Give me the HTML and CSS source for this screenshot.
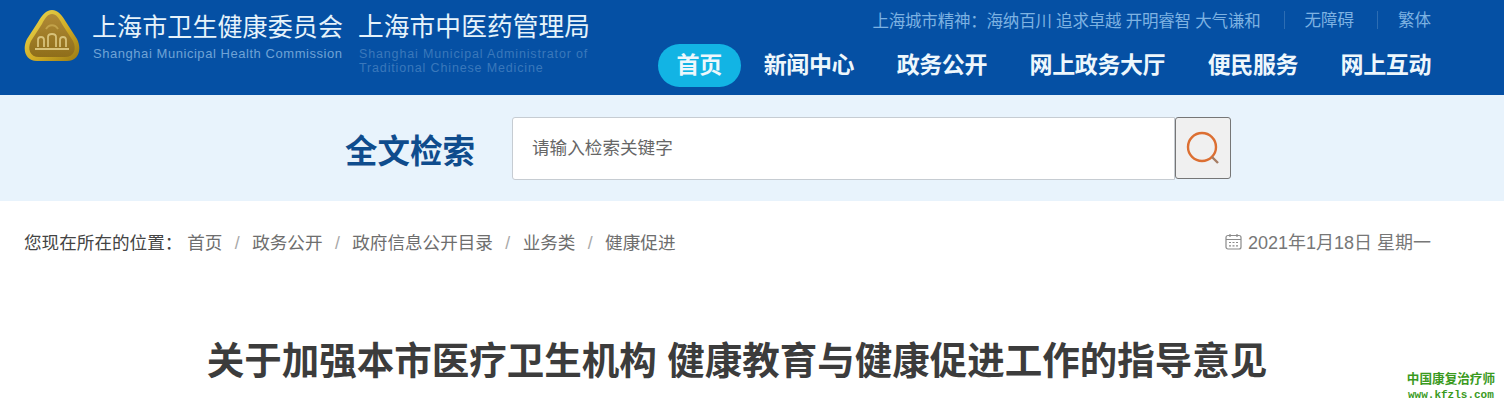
FILE: index.html
```html
<!DOCTYPE html>
<html lang="zh-CN">
<head>
    <meta charset="UTF-8">
    <title>关于加强本市医疗卫生机构 健康教育与健康促进工作的指导意见</title>
    <link rel="stylesheet" href="styles.css">
</head>
<body>
    <header class="header">
        <div class="brand">
            <svg class="logo" width="56" height="54" viewBox="0 0 56 54">
                <defs>
                    <linearGradient id="gold" x1="0" y1="0" x2="1" y2="1">
                        <stop offset="0" stop-color="#eadb55"/>
                        <stop offset="0.55" stop-color="#d2ad26"/>
                        <stop offset="1" stop-color="#9a7a14"/>
                    </linearGradient>
                    <linearGradient id="gold-inner" x1="0" y1="0" x2="0" y2="1">
                        <stop offset="0" stop-color="#b08a36"/>
                        <stop offset="1" stop-color="#8f6e1a"/>
                    </linearGradient>
                </defs>
                <path d="M28 1C34 1 38 6 42 13L53 30C58 40 55 52 43 52H13C1 52 -2 40 3 30L14 13C18 6 22 1 28 1Z" fill="url(#gold)"/>
                <path d="M28 5C32 5 35 9 38 15L49 32C53 40 50 48 41 48H15C6 48 3 40 7 32L18 15C21 9 24 5 28 5Z" fill="url(#gold-inner)"/>
                <path d="M11 40H45M14 38V31C14 27 20 27 20 31V38M24 38V28C24 24 32 24 32 28V38M36 38V31C36 27 42 27 42 31V38" stroke="#d8c27a" stroke-width="1.8" fill="none"/>
                <path d="M22 20C25 15 31 15 34 20" stroke="#c2a24a" stroke-width="2" fill="none"/>
            </svg>
            <div class="org">
                <div class="org-name">上海市卫生健康委员会</div>
                <div class="org-en">Shanghai Municipal Health Commission</div>
            </div>
            <div class="org org-second">
                <div class="org-name">上海市中医药管理局</div>
                <div class="org-en org-en-dim">Shanghai Municipal Administrator of<br>Traditional Chinese Medicine</div>
            </div>
        </div>
        <div class="header-right">
            <div class="top-links">
                <span class="motto">上海城市精神：海纳百川 追求卓越 开明睿智 大气谦和</span>
                <a class="top-link">无障碍</a>
                <a class="top-link">繁体</a>
            </div>
            <nav class="nav">
                <a class="nav-item active">首页</a>
                <a class="nav-item">新闻中心</a>
                <a class="nav-item">政务公开</a>
                <a class="nav-item">网上政务大厅</a>
                <a class="nav-item">便民服务</a>
                <a class="nav-item">网上互动</a>
            </nav>
        </div>
    </header>

    <section class="search-band">
        <h2 class="search-title">全文检索</h2>
        <div class="search-input">请输入检索关键字</div>
        <button class="search-btn" type="button" aria-label="搜索">
            <svg width="34" height="34" viewBox="0 0 34 34" fill="none">
                <circle cx="16" cy="16" r="14" stroke="#dc6f32" stroke-width="2.4"/>
                <path d="M26 26L32 32" stroke="#a67c62" stroke-width="2.4"/>
            </svg>
        </button>
    </section>

    <div class="crumb-row">
        <div class="crumbs">
            <span class="crumb-label">您现在所在的位置：</span>
            <a>首页</a><i>/</i><a>政务公开</a><i>/</i><a>政府信息公开目录</a><i>/</i><a>业务类</a><i>/</i><a>健康促进</a>
        </div>
        <div class="date">
            <svg width="17" height="17" viewBox="0 0 17 17" fill="none" stroke="#8a8a8a" stroke-width="1.2">
                <rect x="1" y="2.5" width="15" height="13.5" rx="2"/>
                <path d="M1 6.5H16M5 1V4M12 1V4"/>
                <path d="M4 9.5H6M7.5 9.5H9.5M11 9.5H13M4 12.8H6M7.5 12.8H9.5M11 12.8H13"/>
            </svg>
            <span>2021年1月18日 星期一</span>
        </div>
    </div>

    <h1 class="title">关于加强本市医疗卫生机构 健康教育与健康促进工作的指导意见</h1>

    <div class="watermark">
        <div class="wm-cn">中国康复治疗师</div>
        <div class="wm-en">www.kfzls.com</div>
    </div>
</body>
</html>
```

FILE: styles.css
```css
html, body {
    margin: 0;
    padding: 0;
}
body {
    position: relative;
    height: 406px;
    overflow: hidden;
    background-color: #fff;
    font-family: "Liberation Sans", "Noto Sans CJK SC", sans-serif;
}
.header {
    display: flex;
    justify-content: space-between;
    height: 95px;
    padding: 0 73px 0 24px;
    background-color: #0550a4;
}
.brand {
    display: flex;
    align-items: flex-start;
    padding-top: 9px;
}
.org {
    margin-left: 13px;
    padding-top: 1px;
}
.org-second {
    margin-left: 15px;
}
.org-name {
    margin-left: -1px;
    font-size: 25px;
    line-height: 34px;
    width: 252px;
    letter-spacing: 0.1px;
    color: #e6f3fb;
    white-space: nowrap;
}
.org-second .org-name {
    width: 233px;
    font-size: 25.7px;
}
.org-en {
    margin-top: 3px;
    font-size: 13px;
    line-height: 14px;
    letter-spacing: 0.55px;
    color: #6fa3d6;
    white-space: nowrap;
}
.org-en-dim {
    color: #3a78bb;
    font-size: 12.5px;
    letter-spacing: 0.85px;
}
.header-right {
    display: flex;
    flex-direction: column;
    align-items: flex-end;
}
.top-links {
    display: flex;
    align-items: center;
    height: 39px;
    font-size: 16.5px;
    color: #7db2e2;
}
.motto {
    letter-spacing: -0.2px;
    white-space: nowrap;
}
.top-link {
    margin-left: 23px;
    padding-left: 20px;
    line-height: 18px;
    border-left: 1px solid #2d6db3;
}
.nav {
    display: flex;
    align-items: center;
    margin-top: 5px;
    color: #eef7fc;
}
.nav-item {
    margin-left: 42.5px;
    font-size: 23px;
    font-weight: 700;
    line-height: 43px;
    white-space: nowrap;
    letter-spacing: -0.4px;
}
.nav-item.active {
    margin-left: 0;
    margin-right: -19.5px;
    padding: 0 19px;
    border-radius: 22px;
    background-color: #12b4e4;
}
.search-band {
    display: flex;
    align-items: center;
    height: 106px;
    padding-left: 345px;
    background-color: #e8f3fc;
}
.search-title {
    margin: 0 37px 0 0;
    width: 130px;
    font-size: 32.5px;
    font-weight: 700;
    white-space: nowrap;
    color: #0f4c8d;
}
.search-input {
    box-sizing: border-box;
    width: 663px;
    height: 63px;
    padding-left: 19px;
    font-size: 17.6px;
    line-height: 61px;
    color: #666;
    background-color: #fff;
    border: 1px solid #c6ccd2;
    border-radius: 3px 0 0 3px;
}
.search-btn {
    box-sizing: border-box;
    display: flex;
    align-items: center;
    justify-content: center;
    width: 56px;
    height: 62px;
    padding: 0;
    background-color: #f0f0f0;
    border: 1px solid #767676;
    border-radius: 3px;
}
.crumb-row {
    box-sizing: border-box;
    display: flex;
    justify-content: space-between;
    align-items: center;
    height: 84px;
    padding: 0 73px 4px 24px;
    font-size: 17.6px;
    color: #6e6e6e;
}
.crumb-label {
    color: #444;
}
.crumbs i {
    margin: 0 12.4px;
    font-style: normal;
    color: #a8a8a8;
}
.date {
    display: flex;
    align-items: center;
    gap: 6px;
    font-size: 18px;
    color: #777;
}
.title {
    margin: 51px 0 0;
    padding-right: 30px;
    text-align: center;
    font-size: 37.5px;
    line-height: 50px;
    font-weight: 700;
    color: #3c3c3c;
    white-space: nowrap;
}
.watermark {
    position: absolute;
    right: 9px;
    bottom: 5px;
    text-align: center;
    font-weight: 700;
    color: #3a9a1e;
    white-space: nowrap;
}
.wm-cn {
    font-size: 12.6px;
    line-height: 15px;
}
.wm-en {
    margin-top: 2px;
    font-family: "Liberation Mono", monospace;
    font-size: 11px;
    line-height: 12px;
}
```
